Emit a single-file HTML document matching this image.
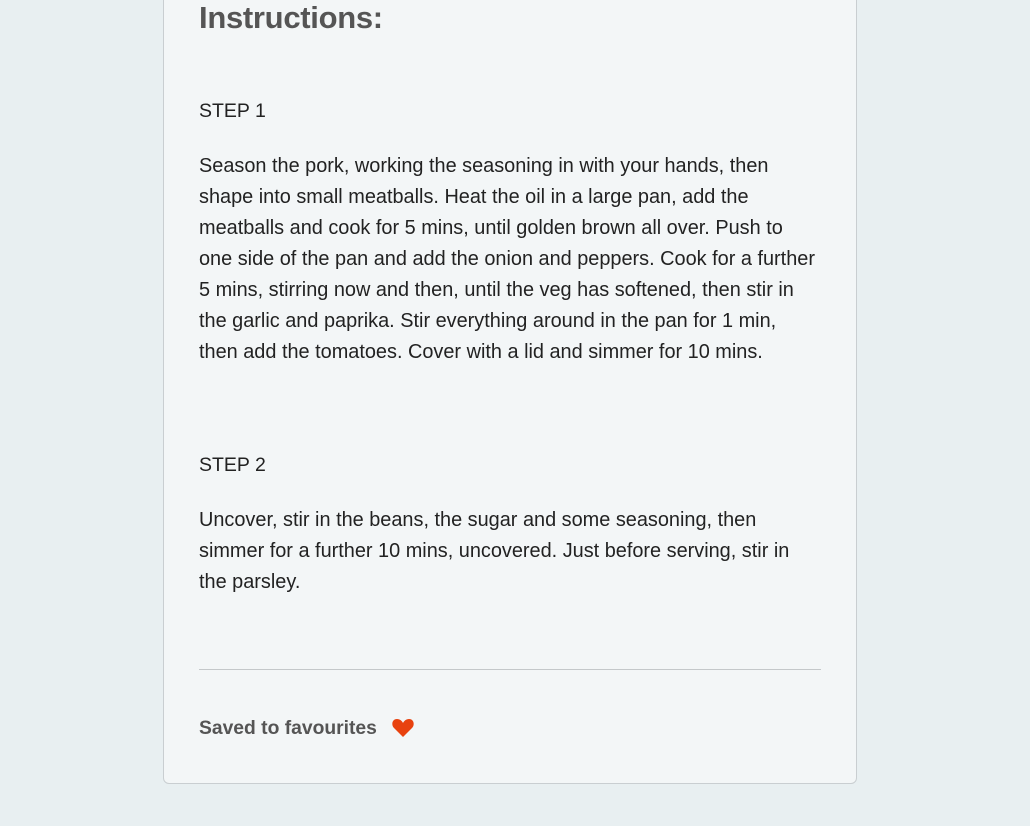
<!DOCTYPE html>
<html><head><style>
html,body{margin:0;padding:0;background:#e8eff1;width:1030px;height:826px;overflow:hidden}
.card{position:absolute;left:163px;top:-20px;width:694px;height:804px;background:#f3f6f7;border:1px solid #c9ced1;border-radius:6px;box-sizing:border-box}
.c{position:absolute;left:199px;width:660px;font-family:"Liberation Sans",sans-serif;color:#222;white-space:nowrap}
h1{position:absolute;left:199px;top:0;margin:0;font:bold 31px "Liberation Sans",sans-serif;color:#555;line-height:36px;letter-spacing:-0.3px}
.step{font-size:19.5px;line-height:22px}
.p{font-size:19.9px;line-height:31px}
.hr{position:absolute;left:199px;top:669px;width:622px;height:1px;background:#c4c8ca}
.saved{position:absolute;left:199px;top:717px;font:bold 19.3px "Liberation Sans",sans-serif;color:#555;line-height:24px}
</style></head><body>
<div class="card"></div>
<h1>Instructions:</h1>
<div class="c step" style="top:100px">STEP 1</div>
<div class="c p" style="top:151px">Season the pork, working the seasoning in with your hands, then<br>shape into small meatballs. Heat the oil in a large pan, add the<br>meatballs and cook for 5 mins, until golden brown all over. Push to<br>one side of the pan and add the onion and peppers. Cook for a further<br>5 mins, stirring now and then, until the veg has softened, then stir in<br>the garlic and paprika. Stir everything around in the pan for 1 min,<br>then add the tomatoes. Cover with a lid and simmer for 10 mins.</div>
<div class="c step" style="top:454px">STEP 2</div>
<div class="c p" style="top:505px">Uncover, stir in the beans, the sugar and some seasoning, then<br>simmer for a further 10 mins, uncovered. Just before serving, stir in<br>the parsley.</div>
<div class="hr"></div>
<div class="saved">Saved to favourites</div>
<svg style="position:absolute;left:392px;top:718px" width="22" height="19" viewBox="0 0 22 19"><path d="M11 19 L2 10 C-1 7 0 1 5 1 C8 1 10 3 11 5 C12 3 14 1 17 1 C22 1 23 7 20 10 Z" fill="#e8420f"/></svg>
</body></html>
